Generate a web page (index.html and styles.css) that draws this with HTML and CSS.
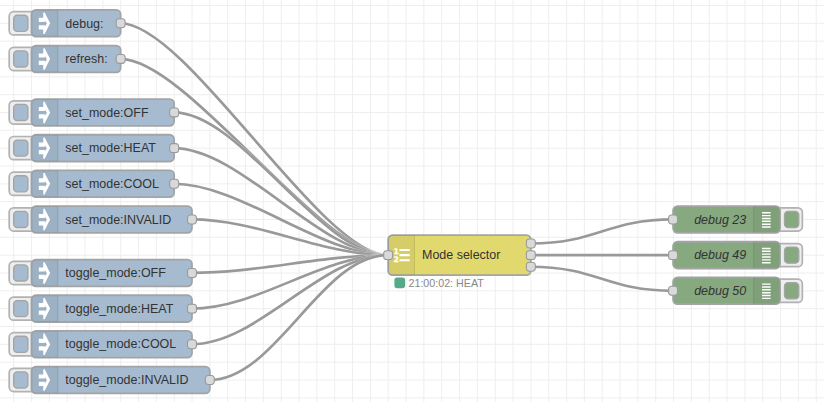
FILE: index.html
```html
<!DOCTYPE html>
<html lang="en">
<head>
<meta charset="utf-8">
<title>Flow</title>
<link rel="stylesheet" href="styles.css">
</head>
<body>
<svg class="workspace" width="824" height="402" viewBox="0 0 824 402">
  <defs>
    <pattern id="grid" width="20" height="20" patternUnits="userSpaceOnUse">
      <path class="grid-line" d="M0 .5H20M.5 0V20"/>
    </pattern>
    <g id="port"><rect class="port" x="-5" y="-5" width="10" height="10" rx="3"/></g>
    <g id="inject-button">
      <rect class="button" x="-25" y="-13" width="32" height="26" rx="5"/>
      <rect class="button-face inject" x="-20" y="-9" width="16" height="18" rx="4"/>
    </g>
    <g id="inject-icon">
      <path class="shade" d="M5 -15H30V15H5a5 5 0 0 1 -5 -5V-10a5 5 0 0 1 5 -5Z"/>
      <path class="divider" d="M29.5 -14.5V14.5"/>
      <path class="glyph" fill-rule="evenodd" d="M8.2 -6.2H13.2V-12H14.8L20.9 0L14.8 12H13.2V6.9H8.2V2.1H15V3.6L17.3 .2L15 -3.2V-1.5H8.2Z"/>
    </g>
    <g id="debug-node">
      <rect class="button" x="113" y="-13" width="32" height="26" rx="5"/>
      <rect class="button-face debug" x="125" y="-9" width="16" height="18" rx="4"/>
      <rect class="node debug" y="-15" width="120" height="30" rx="5"/>
      <path class="shade" d="M90 -15H115a5 5 0 0 1 5 5V10a5 5 0 0 1 -5 5H90Z"/>
      <path class="divider" d="M90.5 -14.5V14.5"/>
      <path class="bars" d="M99.8 -7.5H109.4M99.8 -4.3H109.4M99.8 -1.1H109.4M99.8 2.1H109.4M99.8 5.3H109.4M99.8 8.5H109.4"/>
      <use href="#port"/>
    </g>
    <path id="wire1" d="M120 20.5C195 20.5 345 280.5 420 280.5"/>
    <path id="wire2" d="M120 60.5C195 60.5 345 280.5 420 280.5"/>
    <path id="wire3" d="M180 120.5C255 120.5 345 280.5 420 280.5"/>
    <path id="wire4" d="M180 160.5C255 160.5 345 280.5 420 280.5"/>
    <path id="wire5" d="M180 200.5C255 200.5 345 280.5 420 280.5"/>
    <path id="wire6" d="M200 240.5C275 240.5 345 280.5 420 280.5"/>
    <path id="wire7" d="M200 300.5C275 300.5 345 280.5 420 280.5"/>
    <path id="wire8" d="M200 340.5C275 340.5 345 280.5 420 280.5"/>
    <path id="wire9" d="M200 380.5C275 380.5 345 280.5 420 280.5"/>
    <path id="wire10" d="M220 420.5C295 420.5 345 280.5 420 280.5"/>
    <path id="wire11" d="M580 267.5C655 267.5 665 240.5 740 240.5"/>
    <path id="wire12" d="M580 280.5H740"/>
    <path id="wire13" d="M580 293.5C655 293.5 665 320.5 740 320.5"/>
  </defs>
  <g transform="translate(13.2 5) scale(.8917)">
    <rect x="-20" y="-20" width="960" height="480" fill="url(#grid)"/>
    <g class="wires">
      <use class="wire-outline" href="#wire1"/><use class="wire" href="#wire1"/>
      <use class="wire-outline" href="#wire2"/><use class="wire" href="#wire2"/>
      <use class="wire-outline" href="#wire3"/><use class="wire" href="#wire3"/>
      <use class="wire-outline" href="#wire4"/><use class="wire" href="#wire4"/>
      <use class="wire-outline" href="#wire5"/><use class="wire" href="#wire5"/>
      <use class="wire-outline" href="#wire6"/><use class="wire" href="#wire6"/>
      <use class="wire-outline" href="#wire7"/><use class="wire" href="#wire7"/>
      <use class="wire-outline" href="#wire8"/><use class="wire" href="#wire8"/>
      <use class="wire-outline" href="#wire9"/><use class="wire" href="#wire9"/>
      <use class="wire-outline" href="#wire10"/><use class="wire" href="#wire10"/>
      <use class="wire-outline" href="#wire11"/><use class="wire" href="#wire11"/>
      <use class="wire-outline" href="#wire12"/><use class="wire" href="#wire12"/>
      <use class="wire-outline" href="#wire13"/><use class="wire" href="#wire13"/>
    </g>

    <g transform="translate(20.5 20.5)"><use href="#inject-button"/><rect class="node inject" y="-15" width="100" height="30" rx="5"/><use href="#inject-icon"/><text class="label" x="38" y="5">debug:</text><use href="#port" x="100"/></g>
    <g transform="translate(20.5 60.5)"><use href="#inject-button"/><rect class="node inject" y="-15" width="100" height="30" rx="5"/><use href="#inject-icon"/><text class="label" x="38" y="5">refresh:</text><use href="#port" x="100"/></g>
    <g transform="translate(20.5 120.5)"><use href="#inject-button"/><rect class="node inject" y="-15" width="160" height="30" rx="5"/><use href="#inject-icon"/><text class="label" x="38" y="5">set_mode:OFF</text><use href="#port" x="160"/></g>
    <g transform="translate(20.5 160.5)"><use href="#inject-button"/><rect class="node inject" y="-15" width="160" height="30" rx="5"/><use href="#inject-icon"/><text class="label" x="38" y="4.4">set_mode:HEAT</text><use href="#port" x="160"/></g>
    <g transform="translate(20.5 200.5)"><use href="#inject-button"/><rect class="node inject" y="-15" width="160" height="30" rx="5"/><use href="#inject-icon"/><text class="label" x="38" y="5">set_mode:COOL</text><use href="#port" x="160"/></g>
    <g transform="translate(20.5 240.5)"><use href="#inject-button"/><rect class="node inject" y="-15" width="180" height="30" rx="5"/><use href="#inject-icon"/><text class="label" x="38" y="5">set_mode:INVALID</text><use href="#port" x="180"/></g>
    <g transform="translate(20.5 300.5)"><use href="#inject-button"/><rect class="node inject" y="-15" width="180" height="30" rx="5"/><use href="#inject-icon"/><text class="label" x="38" y="4.6">toggle_mode:OFF</text><use href="#port" x="180"/></g>
    <g transform="translate(20.5 340.5)"><use href="#inject-button"/><rect class="node inject" y="-15" width="180" height="30" rx="5"/><use href="#inject-icon"/><text class="label" x="38" y="5">toggle_mode:HEAT</text><use href="#port" x="180"/></g>
    <g transform="translate(20.5 380.5)"><use href="#inject-button"/><rect class="node inject" y="-15" width="180" height="30" rx="5"/><use href="#inject-icon"/><text class="label" x="38" y="4.4">toggle_mode:COOL</text><use href="#port" x="180"/></g>
    <g transform="translate(20.5 420.5)"><use href="#inject-button"/><rect class="node inject" y="-15" width="200" height="30" rx="5"/><use href="#inject-icon"/><text class="label" x="38" y="5">toggle_mode:INVALID</text><use href="#port" x="200"/></g>

    <g transform="translate(420.5 280.5)">
      <rect class="node selector" y="-22.5" width="160" height="45" rx="5"/>
      <path class="shade" d="M5 -22.5H30V22.5H5a5 5 0 0 1 -5 -5V-17.5a5 5 0 0 1 5 -5Z"/>
      <path class="divider" d="M29.5 -22V22"/>
      <path class="list-lines" d="M12.6 -5.7H24.2M12.6 0H24.2M12.6 5.7H24.2"/>
      <text class="list-number" x="6" y="-1.6">1</text>
      <text class="list-number" x="6" y="7.6">2</text>
      <text class="label" x="38" y="4.3">Mode selector</text>
      <use href="#port"/>
      <use href="#port" x="160" y="-13"/>
      <use href="#port" x="160"/>
      <use href="#port" x="160" y="13"/>
      <rect class="status-dot" x="8" y="26.2" width="10" height="10" rx="2"/>
      <text class="status" x="22.8" y="35.5">21:00:02: HEAT</text>
    </g>

    <g transform="translate(740 240.5)"><use href="#debug-node"/><text class="label output" x="82" y="5">debug 23</text></g>
    <g transform="translate(740 280.5)"><use href="#debug-node"/><text class="label output" x="82" y="4.3">debug 49</text></g>
    <g transform="translate(740 320.5)"><use href="#debug-node"/><text class="label output" x="82" y="5">debug 50</text></g>
  </g>
</svg>
</body>
</html>
```
FILE: styles.css
```css
body {
  margin: 0;
  background: #fff;
  font-family: "Liberation Sans", Arial, sans-serif;
}

.workspace {
  display: block;
}

.grid-line {
  fill: none;
  stroke: #eee;
  stroke-width: 1.12;
}

.wires {
  fill: none;
}

.wire {
  stroke: #999;
  stroke-width: 3;
}

.wire-outline {
  stroke: #fff;
  stroke-width: 3.6;
  stroke-opacity: .6;
}

.node {
  stroke: #a2a4a6;
  stroke-width: 2;
}

.inject {
  fill: #a6bbcf;
}

.debug {
  fill: #87a980;
}

.selector {
  fill: #e2d96e;
}

.button {
  fill: #eee;
  stroke: #b2b2b2;
  stroke-width: 1.9;
}

.button-face {
  stroke: #a4a4a4;
  stroke-width: 1.5;
}

.port {
  fill: #d9d9d9;
  stroke: #999;
  stroke-width: 1.2;
}

.shade {
  fill: #000;
  fill-opacity: .05;
}

.divider {
  fill: none;
  stroke: #000;
  stroke-opacity: .1;
}

.glyph {
  fill: #fff;
}

.bars {
  fill: none;
  stroke: #fff;
  stroke-width: 1.6;
}

.list-lines {
  fill: none;
  stroke: #fff;
  stroke-width: 2.3;
}

.list-number {
  fill: #fff;
  stroke: #fff;
  stroke-width: .3;
  font-family: "DejaVu Sans", sans-serif;
  font-size: 8.6px;
  font-weight: bold;
}

.label {
  fill: #333;
  font-size: 14px;
}

.output {
  font-style: italic;
  text-anchor: end;
}

.status {
  fill: #888;
  font-size: 12px;
}

.status-dot {
  fill: #5a8;
  stroke: #5a8;
  stroke-width: 2;
}
```
